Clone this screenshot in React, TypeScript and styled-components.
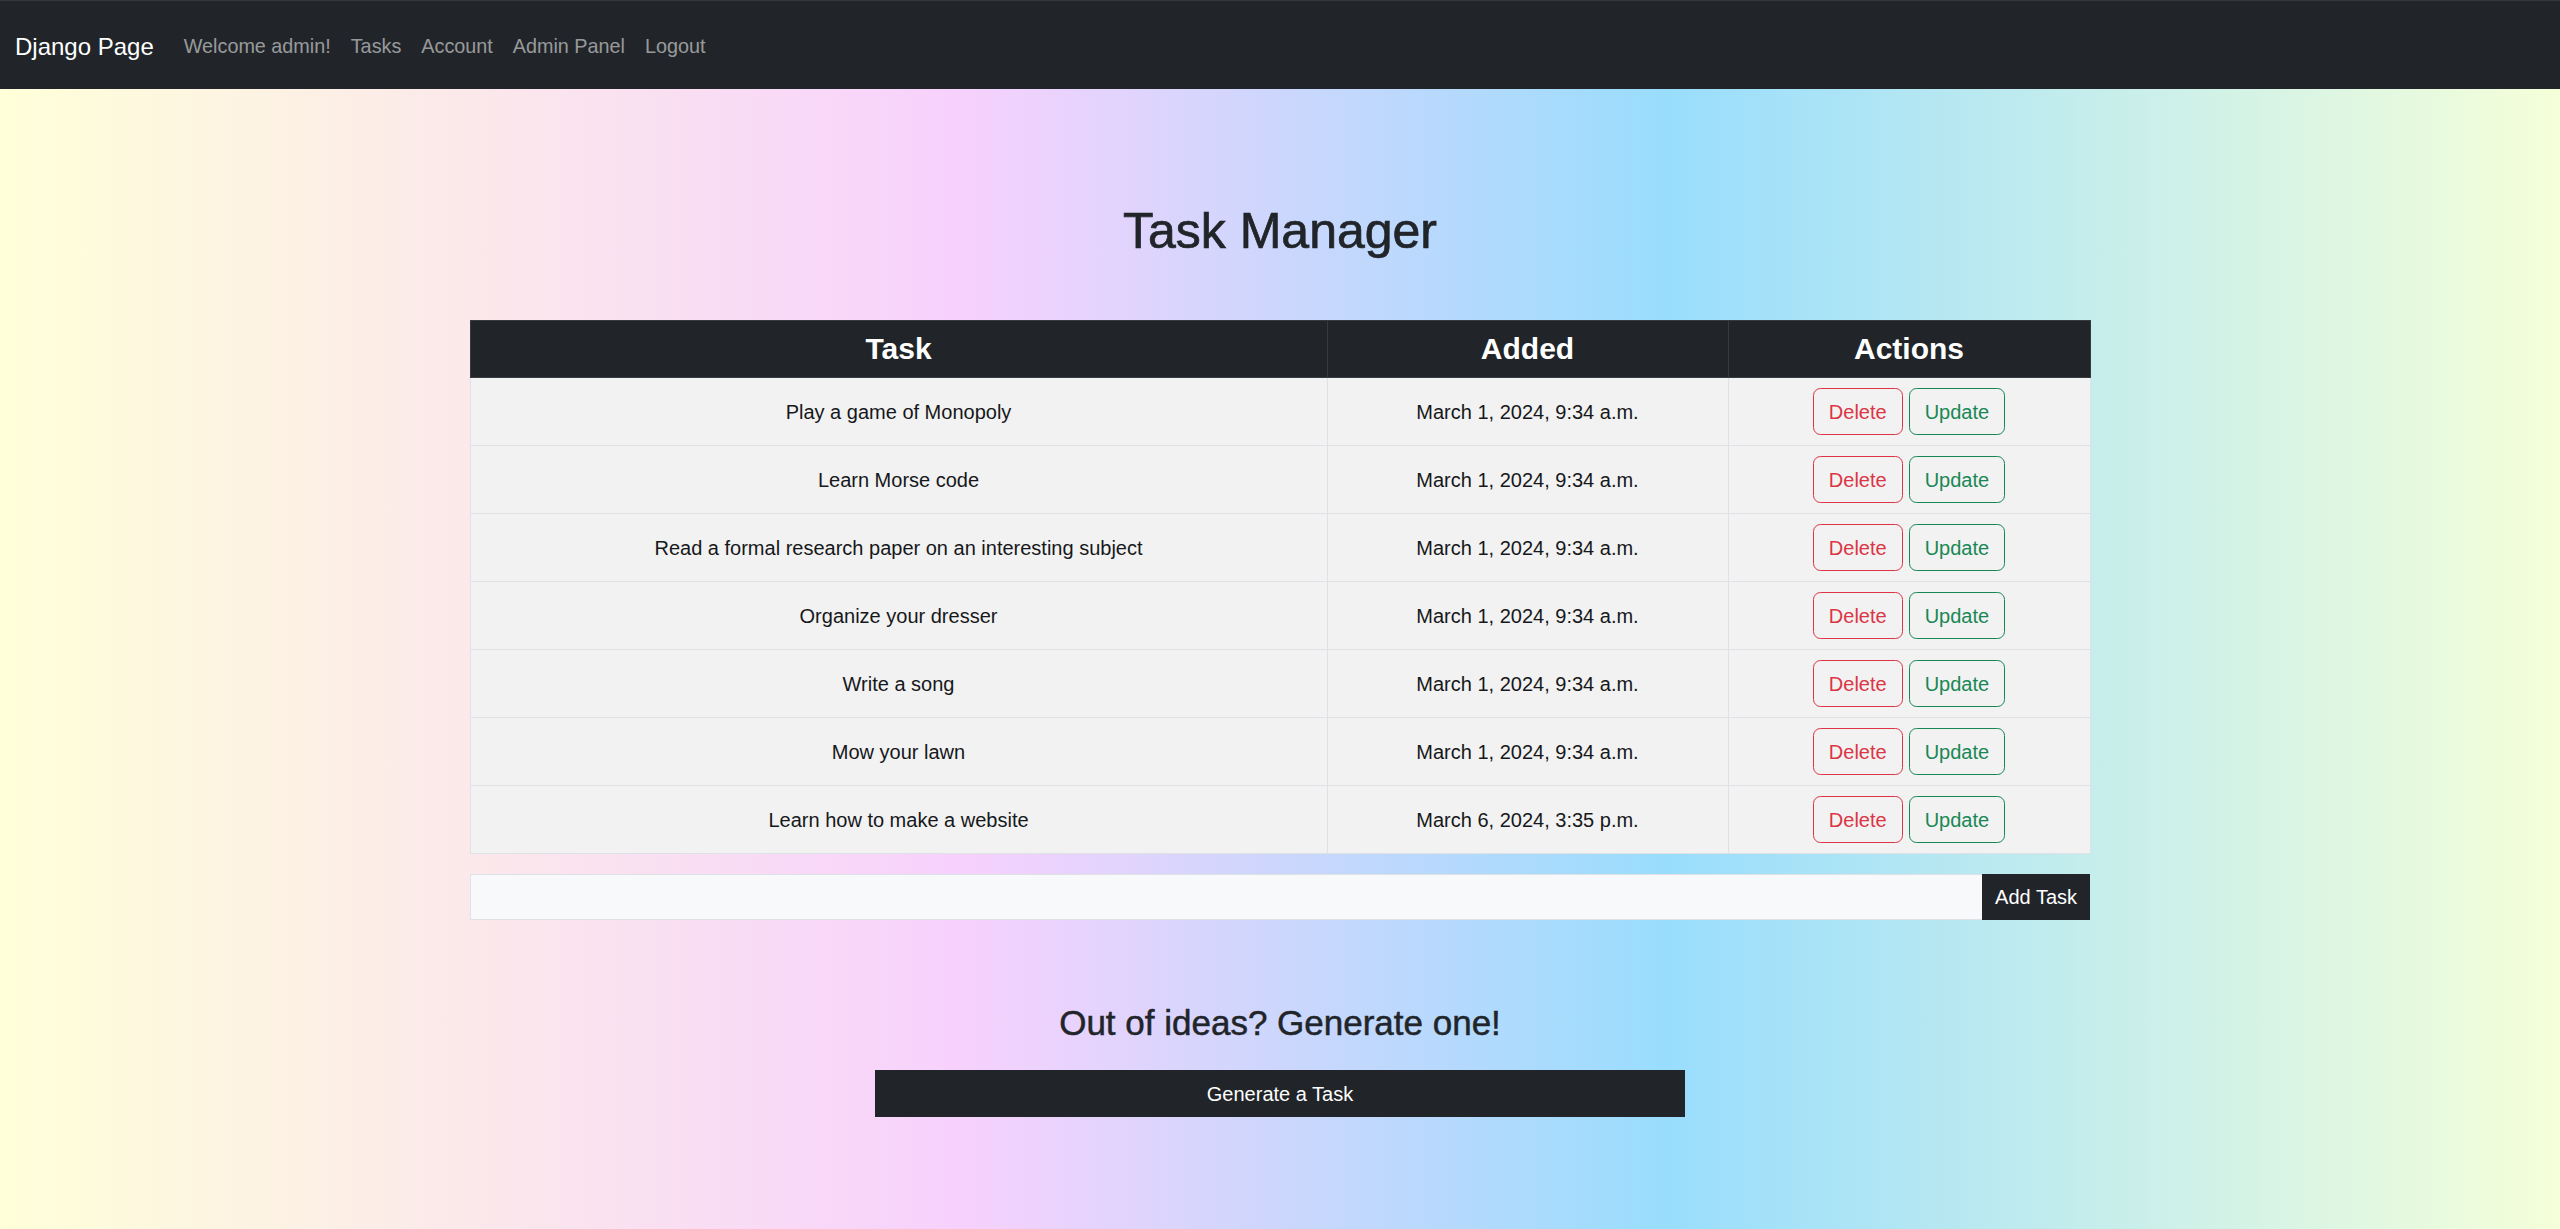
import React from "react";
import styled, { createGlobalStyle } from "styled-components";

const GlobalStyle = createGlobalStyle`
  * { box-sizing: border-box; }
  html, body { margin: 0; padding: 0; }
  body {
    font-family: "Liberation Sans", Arial, sans-serif;
    color: #212529;
    background: #212529;
  }
`;

const Page = styled.div`
  min-height: 100vh;
  display: flex;
  flex-direction: column;
`;

const NavBar = styled.nav`
  height: 89px;
  flex: 0 0 auto;
  display: flex;
  align-items: center;
  padding: 3px 15px 0;
  background: #212529;
  border-top: 1px solid #34373b;
`;

const Brand = styled.a`
  color: #ffffff;
  font-size: 24px;
  line-height: 1.5;
  margin-right: 20px;
  text-decoration: none;
`;

const NavList = styled.div`
  display: flex;
  align-items: center;
`;

const NavLink = styled.a`
  color: rgba(255, 255, 255, 0.55);
  font-size: 19.8px;
  line-height: 1.5;
  padding: 10px 10px;
  text-decoration: none;
`;

const Main = styled.main`
  flex: 1 1 auto;
  background: linear-gradient(
    90deg,
    #ffffd9 0%,
    #f7d1fd 37.5%,
    #99ddfd 65%,
    #f5ffd9 100%
  );
  padding: 112px 0 60px;
`;

const Container = styled.div`
  width: 1620px;
  margin: 0 auto;
  display: flex;
  flex-direction: column;
  align-items: center;
`;

const Title = styled.h1`
  margin: 0 0 59px;
  font-size: 50px;
  line-height: 60px;
  font-weight: 400;
  -webkit-text-stroke: 0.7px #212529;
  color: #212529;
  text-align: center;
`;

const Table = styled.table`
  width: 100%;
  border-collapse: collapse;
  margin-bottom: 20px;
  table-layout: fixed;
`;

const HeadCell = styled.th<{ $w: number }>`
  width: ${(p) => p.$w}px;
  background: #212529;
  color: #ffffff;
  border: 1px solid #373b3e;
  padding: 10px;
  font-size: 30px;
  line-height: 36px;
  font-weight: 700;
  text-align: center;
`;

const Cell = styled.td`
  background: #f2f2f2;
  border: 1px solid #dee2e6;
  padding: 10px;
  height: 68px;
  font-size: 20px;
  line-height: 30px;
  text-align: center;
  vertical-align: middle;
  color: #16181b;
`;

const Actions = styled.div`
  display: flex;
  justify-content: center;
  gap: 6px;
`;

const OutlineButton = styled.button<{ $tone: string }>`
  font-family: inherit;
  font-size: 20px;
  line-height: 30px;
  padding: 7.5px 15px;
  border-radius: 7.5px;
  background: transparent;
  color: ${(p) => p.$tone};
  border: 1px solid ${(p) => p.$tone};
  cursor: pointer;
`;

const AddForm = styled.form`
  width: 100%;
  display: flex;
  height: 46px;
  margin-bottom: 82px;
`;

const TaskInput = styled.input`
  flex: 1 1 auto;
  height: 100%;
  background: #f8f9fa;
  border: 1px solid #dee2e6;
  border-right: none;
  font-family: inherit;
  font-size: 20px;
  padding: 0 15px;
  outline: none;
`;

const DarkButton = styled.button<{ $wide?: boolean }>`
  font-family: inherit;
  font-size: 20px;
  line-height: 30px;
  color: #ffffff;
  background: #212529;
  border: none;
  padding: ${(p) => (p.$wide ? "8.5px 15px" : "0 13px")};
  width: ${(p) => (p.$wide ? "810px" : "auto")};
  cursor: pointer;
`;

const SubTitle = styled.h3`
  margin: 0 0 26px;
  font-size: 35px;
  line-height: 42px;
  font-weight: 400;
  -webkit-text-stroke: 0.5px #212529;
  color: #212529;
  text-align: center;
`;

const tasks: [string, string][] = [
  ["Play a game of Monopoly", "March 1, 2024, 9:34 a.m."],
  ["Learn Morse code", "March 1, 2024, 9:34 a.m."],
  ["Read a formal research paper on an interesting subject", "March 1, 2024, 9:34 a.m."],
  ["Organize your dresser", "March 1, 2024, 9:34 a.m."],
  ["Write a song", "March 1, 2024, 9:34 a.m."],
  ["Mow your lawn", "March 1, 2024, 9:34 a.m."],
  ["Learn how to make a website", "March 6, 2024, 3:35 p.m."],
];

export default function App() {
  return (
    <Page>
      <GlobalStyle />
      <NavBar>
        <Brand href="#">Django Page</Brand>
        <NavList>
          <NavLink href="#">Welcome admin!</NavLink>
          <NavLink href="#">Tasks</NavLink>
          <NavLink href="#">Account</NavLink>
          <NavLink href="#">Admin Panel</NavLink>
          <NavLink href="#">Logout</NavLink>
        </NavList>
      </NavBar>
      <Main>
        <Container>
          <Title>Task Manager</Title>
          <Table>
            <thead>
              <tr>
                <HeadCell $w={857}>Task</HeadCell>
                <HeadCell $w={401}>Added</HeadCell>
                <HeadCell $w={362}>Actions</HeadCell>
              </tr>
            </thead>
            <tbody>
              {tasks.map(([name, date], i) => (
                <tr key={i}>
                  <Cell>{name}</Cell>
                  <Cell>{date}</Cell>
                  <Cell>
                    <Actions>
                      <OutlineButton $tone="#dc3545">Delete</OutlineButton>
                      <OutlineButton $tone="#198754">Update</OutlineButton>
                    </Actions>
                  </Cell>
                </tr>
              ))}
            </tbody>
          </Table>
          <AddForm onSubmit={(e) => e.preventDefault()}>
            <TaskInput type="text" />
            <DarkButton type="submit">Add Task</DarkButton>
          </AddForm>
          <SubTitle>Out of ideas? Generate one!</SubTitle>
          <DarkButton $wide type="button">Generate a Task</DarkButton>
        </Container>
      </Main>
    </Page>
  );
}
